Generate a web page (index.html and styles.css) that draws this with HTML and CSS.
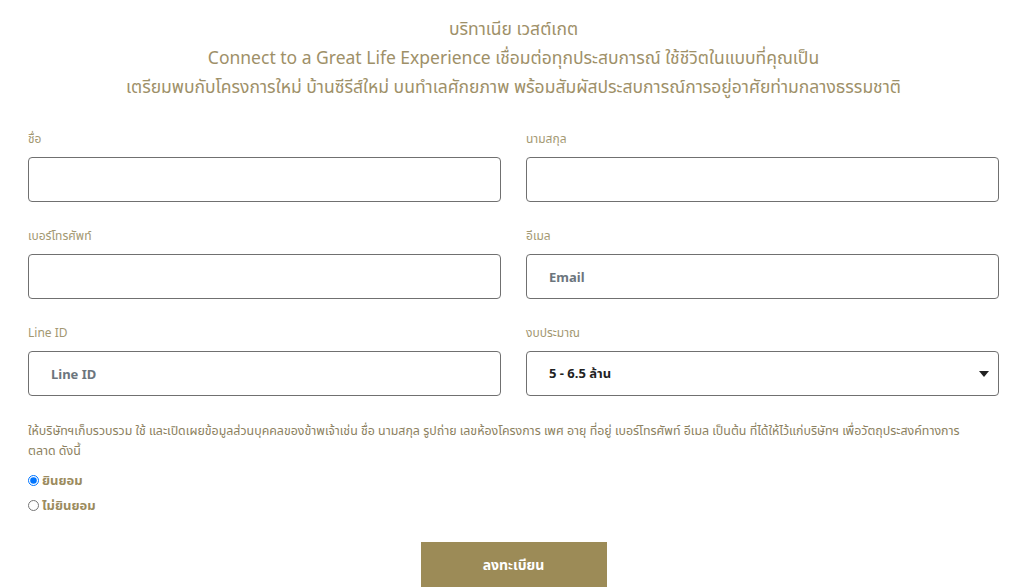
FILE: index.html
```html
<!DOCTYPE html>
<html lang="th">
<head>
<meta charset="utf-8">
<link rel="stylesheet" href="styles.css">
</head>
<body>
<div class="page">
  <header class="intro">
    <p>บริทาเนีย เวสต์เกต</p>
    <p>Connect to a Great Life Experience เชื่อมต่อทุกประสบการณ์ ใช้ชีวิตในแบบที่คุณเป็น</p>
    <p>เตรียมพบกับโครงการใหม่ บ้านซีรีส์ใหม่ บนทำเลศักยภาพ พร้อมสัมผัสประสบการณ์การอยู่อาศัยท่ามกลางธรรมชาติ</p>
  </header>
  <form class="form">
    <div class="grid">
      <label class="field"><span class="label">ชื่อ</span><input class="input" type="text"></label>
      <label class="field"><span class="label">นามสกุล</span><input class="input" type="text"></label>
      <label class="field"><span class="label">เบอร์โทรศัพท์</span><input class="input" type="text"></label>
      <label class="field"><span class="label">อีเมล</span><input class="input" type="text" placeholder="Email"></label>
      <label class="field"><span class="label">Line ID</span><input class="input" type="text" placeholder="Line ID"></label>
      <label class="field"><span class="label">งบประมาณ</span>
        <span class="select">
          <span class="select-value">5 - 6.5 ล้าน</span>
          <svg class="caret" width="10" height="6" viewBox="0 0 10 6"><path d="M0 0h10L5 6z" fill="#222"/></svg>
        </span>
      </label>
    </div>
    <p class="consent">ให้บริษัทฯเก็บรวบรวม ใช้ และเปิดเผยข้อมูลส่วนบุคคลของข้าพเจ้าเช่น ชื่อ นามสกุล รูปถ่าย เลขห้องโครงการ เพศ อายุ ที่อยู่ เบอร์โทรศัพท์ อีเมล เป็นต้น ที่ได้ให้ไว้แก่บริษัทฯ เพื่อวัตถุประสงค์ทางการ ตลาด ดังนี้</p>
    <div class="radios">
      <label class="radio"><input type="radio" name="c" checked> ยินยอม</label>
      <label class="radio"><input type="radio" name="c"> ไม่ยินยอม</label>
    </div>
    <div class="actions"><button type="button" class="submit">ลงทะเบียน</button></div>
  </form>
</div>
</body>
</html>
```
FILE: styles.css
```css
html, body { margin: 0; padding: 0; background: #fff; }
body { font-family: "Noto Sans", "Noto Sans Thai", sans-serif; color: #9b8b5e; overflow: hidden; }
.page { padding: 14px 25px 0 28px; }
.intro { text-align: center; font-size: 17.5px; line-height: 29px; color: #9e9068; }
.intro p { margin: 0; }
.form { margin-top: 28px; }
.grid { display: grid; grid-template-columns: 1fr 1fr; column-gap: 25px; row-gap: 24px; }
.field { display: flex; flex-direction: column; }
.label { font-size: 12px; line-height: 20px; color: #a39872; margin-bottom: 8px; }
.input, .select { box-sizing: border-box; height: 45px; border: 1px solid #707070; border-radius: 4px; padding: 0 22px; font-family: inherit; font-size: 13px; font-weight: 700; color: #222; background: #fff; outline: none; }
.input::placeholder { color: #6c757d; }
.select { display: flex; align-items: center; justify-content: space-between; padding-right: 9px; }
.caret { display: block; }
.consent { margin: 25px 0 0; max-width: 960px; font-size: 12.4px; line-height: 20px; color: #8c8160; }
.radios { margin-top: 9px; display: flex; flex-direction: column; gap: 5px; }
.radio { font-size: 13px; font-weight: 700; line-height: 20px; color: #9b8b5e; display: flex; align-items: center; gap: 3px; }
.radio input { margin: 0; width: 11px; height: 11px; }
.actions { display: flex; justify-content: center; margin-top: 27px; }
.submit { width: 186px; height: 46px; border: 0; border-radius: 0; background: #9c8b57; color: #fff; font-family: inherit; font-size: 14px; font-weight: 700; }
```
